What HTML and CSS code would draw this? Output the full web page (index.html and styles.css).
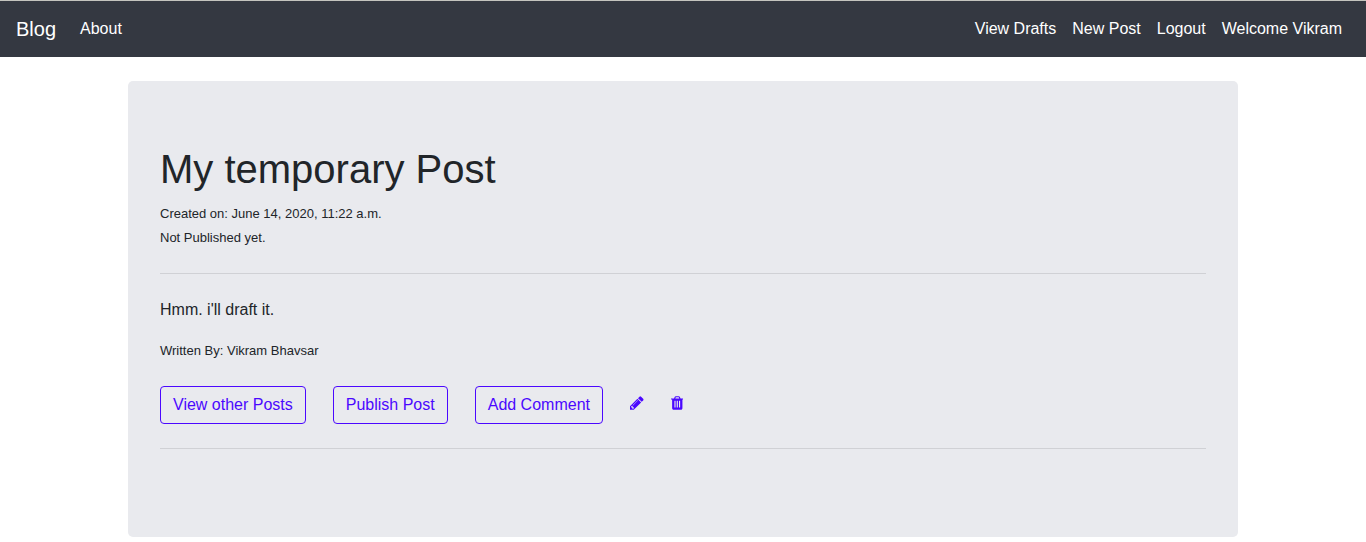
FILE: index.html
```html
<!DOCTYPE html>
<html lang="en">
<head>
<meta charset="utf-8">
<meta name="viewport" content="width=device-width, initial-scale=1">
<title>My temporary Post</title>
<link rel="stylesheet" href="styles.css">
</head>
<body>
<nav class="navbar">
  <a class="brand" href="#">Blog</a>
  <a class="nav-link" href="#">About</a>
  <div class="nav-right">
    <a class="nav-link" href="#">View Drafts</a>
    <a class="nav-link" href="#">New Post</a>
    <a class="nav-link" href="#">Logout</a>
    <a class="nav-link" href="#">Welcome Vikram</a>
  </div>
</nav>
<main class="container">
  <article class="post">
    <h1 class="title">My temporary Post</h1>
    <p class="meta"><small class="small">Created on: June 14, 2020, 11:22 a.m.</small></p>
    <p class="meta"><small class="small">Not Published yet.</small></p>
    <hr class="rule">
    <p class="body-text">Hmm. i'll draft it.</p>
    <p class="meta"><small class="small">Written By: Vikram Bhavsar</small></p>
    <div class="actions">
      <a class="btn" href="#">View other Posts</a>
      <a class="btn" href="#">Publish Post</a>
      <a class="btn" href="#">Add Comment</a>
      <a class="icon-link" href="#" aria-label="Edit post"><svg class="icon" viewBox="0 0 1536 1792" aria-hidden="true"><path d="M363 1536l91-91-235-235-91 91v107h128v128h107zM886 608q0-22-22-22-10 0-17 7l-542 542q-7 7-7 17 0 22 22 22 10 0 17-7l542-542q7-7 7-17zM832 416l416 416-832 832h-416v-416zM1515 512q0 53-37 90l-166 166-416-416 166-165q36-38 90-38 53 0 91 38l235 234q37 39 37 91z" fill-rule="evenodd"/></svg></a>
      <a class="icon-link" href="#" aria-label="Delete post"><svg class="icon" viewBox="0 0 1408 1792" aria-hidden="true"><path d="M512 1376v-704q0-14-9-23t-23-9h-64q-14 0-23 9t-9 23v704q0 14 9 23t23 9h64q14 0 23-9t9-23zM768 1376v-704q0-14-9-23t-23-9h-64q-14 0-23 9t-9 23v704q0 14 9 23t23 9h64q14 0 23-9t9-23zM1024 1376v-704q0-14-9-23t-23-9h-64q-14 0-23 9t-9 23v704q0 14 9 23t23 9h64q14 0 23-9t9-23zM480 384h448l-48-117q-7-9-17-11h-317q-10 2-17 11zM1408 416v64q0 14-9 23t-23 9h-96v948q0 83-47 143.500t-113 60.500h-832q-66 0-113-58.500t-47-141.500v-952h-96q-14 0-23-9t-9-23v-64q0-14 9-23t23-9h309l70-167q15-37 54-63t79-26h320q40 0 79 26t54 63l70 167h309q14 0 23 9t9 23z" fill-rule="evenodd"/></svg></a>
    </div>
    <hr class="rule">
  </article>
</main>
</body>
</html>
```
FILE: styles.css
```css
* {
  box-sizing: border-box;
}

body {
  margin: 0;
  background: #fff;
  color: #212529;
  font-family: "Liberation Sans", Arial, sans-serif;
  font-size: 16px;
  line-height: 24px;
}

a {
  text-decoration: none;
}

.navbar {
  display: flex;
  align-items: center;
  padding: 8px 16px;
  border-top: 1px solid #c4c4be;
  background: #343841;
}

.brand {
  margin-right: 16px;
  color: #fff;
  font-size: 20px;
  line-height: 30px;
}

.nav-link {
  padding: 8px;
  color: #fff;
}

.nav-right {
  display: flex;
  margin-left: auto;
}

.container {
  max-width: 1140px;
  margin: 24px auto 0;
  padding: 0 15px;
}

.post {
  margin-bottom: 5px;
  padding: 64px 32px;
  border-radius: 5px;
  background: #e9eaee;
}

.title {
  margin: 0 0 8px;
  font-size: 40px;
  font-weight: 400;
  line-height: 48px;
}

.meta {
  margin: 0;
}

.small {
  font-size: 13px;
  line-height: 16px;
}

.rule {
  margin: 24px 0;
  border: 0;
  border-top: 1px solid #d0d1d5;
}

.body-text {
  margin: 0 0 16px;
}

.actions {
  display: flex;
  flex-wrap: wrap;
  gap: 27px;
  margin-top: 24px;
}

.btn {
  padding: 6px 12px;
  border: 1px solid #4b08ff;
  border-radius: 4px;
  color: #4b08ff;
}

.icon-link {
  display: flex;
  align-items: center;
  padding-bottom: 4px;
  color: #4b08ff;
}

.icon {
  display: block;
  height: 16px;
  fill: currentColor;
}
```
